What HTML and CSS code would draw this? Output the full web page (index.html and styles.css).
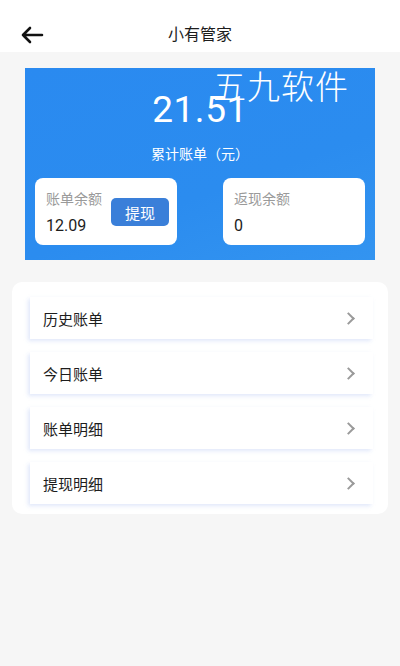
FILE: index.html
```html
<!DOCTYPE html>
<html lang="zh-CN">
<head>
  <meta charset="UTF-8">
  <meta name="viewport" content="width=device-width, initial-scale=1.0">
  <title>小有管家</title>
  <link rel="stylesheet" href="styles.css">
</head>
<body>
  <header class="topbar">
    <span class="back">
      <svg width="24" height="18" viewBox="0 0 24 18">
        <path d="M22 9H3M10 2L3 9l7 7" fill="none" stroke="#111" stroke-width="2.6" stroke-linecap="round" stroke-linejoin="round"/>
      </svg>
    </span>
    <h1>小有管家</h1>
  </header>

  <main class="page">
    <section class="summary">
      <div class="total">21.51</div>
      <div class="total-label">累计账单（元）</div>
      <div class="balances">
        <div class="balance">
          <div class="balance-info">
            <div class="balance-label">账单余额</div>
            <div class="balance-value">12.09</div>
          </div>
          <button class="withdraw">提现</button>
        </div>
        <div class="balance">
          <div class="balance-info">
            <div class="balance-label">返现余额</div>
            <div class="balance-value">0</div>
          </div>
        </div>
      </div>
      <div class="watermark">五九软件</div>
    </section>

    <section class="menu">
      <div class="menu-item"><span>历史账单</span><span class="chev"></span></div>
      <div class="menu-item"><span>今日账单</span><span class="chev"></span></div>
      <div class="menu-item"><span>账单明细</span><span class="chev"></span></div>
      <div class="menu-item"><span>提现明细</span><span class="chev"></span></div>
    </section>
  </main>
</body>
</html>
```

FILE: styles.css
```css
:root {
  --bg-color: #f6f6f6;
  --text-primary: #1d1d1d;
  --text-secondary: #9a9a9a;
}

body {
  margin: 0;
  font-family: Roboto, "Noto Sans CJK SC", sans-serif;
  background-color: var(--bg-color);
  color: var(--text-primary);
  min-height: 100vh;
}

.topbar {
  position: relative;
  height: 52px;
  background: #ffffff;
  display: flex;
  align-items: center;
  justify-content: center;
}

.topbar h1 {
  margin: 0;
  font-size: 16px;
  font-weight: 400;
  padding-top: 14px;
}

.back {
  position: absolute;
  left: 20px;
  top: 26px;
  display: flex;
}

.page {
  padding: 16px 12px;
}

.summary {
  position: relative;
  margin: 0 13px;
  height: 192px;
  box-sizing: border-box;
  background: linear-gradient(160deg, #2a8af0 0%, #2b8cef 60%, #3394f0 100%);
  color: #ffffff;
  padding-top: 20px;
  text-align: center;
}

.total {
  font-size: 37px;
  line-height: 44px;
  letter-spacing: 0.5px;
}

.total-label {
  margin-top: 12px;
  font-size: 14px;
  line-height: 20px;
}

.balances {
  display: flex;
  justify-content: space-between;
  padding: 14px 10px 0 10px;
}

.balance {
  width: 142px;
  height: 67px;
  box-sizing: border-box;
  background: #ffffff;
  border-radius: 8px;
  padding: 11px 8px 0 11px;
  display: flex;
  justify-content: space-between;
  text-align: left;
}

.balance-label {
  font-size: 14px;
  line-height: 20px;
  color: var(--text-secondary);
}

.balance-value {
  margin-top: 7px;
  font-size: 16px;
  line-height: 20px;
  color: var(--text-primary);
}

.withdraw {
  margin-top: 9px;
  width: 58px;
  height: 28px;
  border: none;
  border-radius: 5px;
  background: #3a7fd9;
  color: #ffffff;
  font-family: inherit;
  font-size: 15px;
  padding: 0;
}

.watermark {
  position: absolute;
  top: 0;
  left: 188px;
  font-family: "Noto Sans CJK SC", sans-serif;
  font-weight: 300;
  font-size: 33px;
  line-height: 34px;
  letter-spacing: 1px;
  color: #ffffff;
}

.menu {
  margin-top: 22px;
  background: #ffffff;
  border-radius: 10px;
  padding: 15px 15px 10px 18px;
}

.menu-item {
  height: 42px;
  margin-bottom: 13px;
  padding: 0 20px 0 13px;
  display: flex;
  align-items: center;
  justify-content: space-between;
  font-size: 15px;
  background: #ffffff;
  box-shadow: -2px 2px 4px rgba(170, 190, 240, 0.35);
}

.menu-item:last-child {
  margin-bottom: 0;
}

.chev {
  width: 7px;
  height: 7px;
  border-top: 2px solid #9a9a9a;
  border-right: 2px solid #9a9a9a;
  transform: rotate(45deg);
}
```
